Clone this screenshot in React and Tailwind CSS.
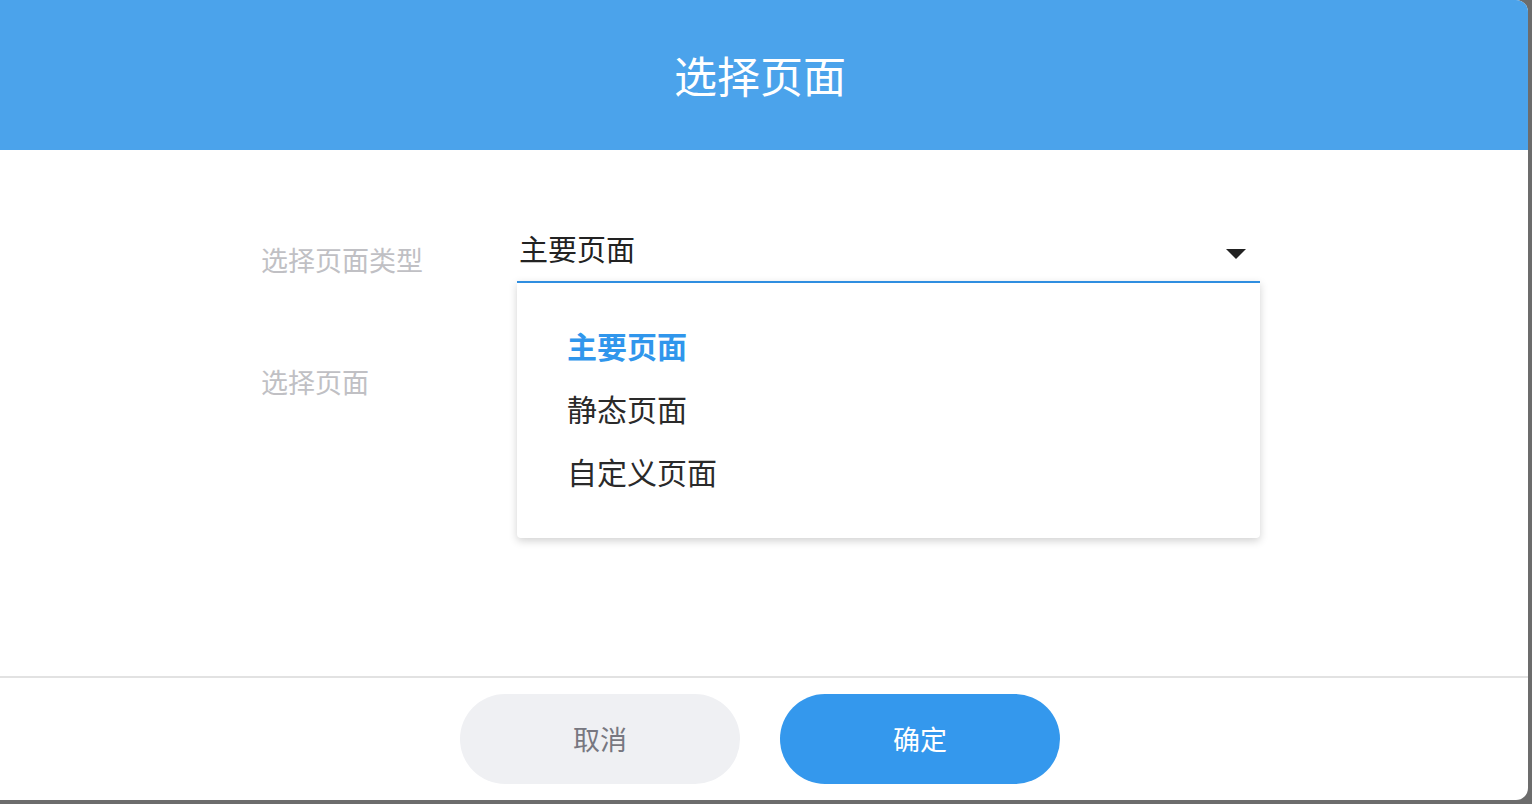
import React, { useState } from 'react';

const options = ['主要页面', '静态页面', '自定义页面'];

const SelectPageModal = () => {
    const [selected, setSelected] = useState('主要页面');

    return (
        <div
            className="w-[1532px] h-[804px] bg-[#6c6c6c] overflow-hidden"
            style={{ fontFamily: '"Noto Sans CJK SC", "Noto Sans", sans-serif' }}
        >
            <div className="w-[1528px] h-[800px] bg-white rounded-r-[12px] flex flex-col overflow-hidden">
                {/* Header */}
                <div className="h-[150px] shrink-0 bg-[#4ba3eb] flex items-center justify-center pb-[2px] pr-[8px]">
                    <h2 className="text-[43px] text-white">选择页面</h2>
                </div>

                {/* Body */}
                <div className="flex-1 pl-[261px] pt-[78px]">
                    <div className="flex">
                        <div className="w-[256px] flex flex-col">
                            <div className="h-[64px] flex items-center text-[27px] text-[#c0c0c4]">选择页面类型</div>
                            <div className="mt-[68px] h-[44px] flex items-center text-[27px] text-[#c0c0c4]">选择页面</div>
                        </div>

                        <div className="relative w-[743px]">
                            <div className="h-[53px] flex items-start justify-between pl-[2px] pr-[14px]">
                                <span className="text-[29px] text-[#222] leading-[40px]">{selected}</span>
                                <svg width="20" height="11" viewBox="0 0 20 11" className="mt-[21px]">
                                    <path d="M0 0 L20 0 L10 10 Z" fill="#222" />
                                </svg>
                            </div>

                            {/* Dropdown menu */}
                            <div className="absolute left-0 top-[53px] w-[743px] h-[257px] bg-white border-t-2 border-[#2f8ee0] rounded-b-[4px] shadow-[0_3px_8px_rgba(0,0,0,0.18)] pl-[50px] pt-[30px] flex flex-col">
                                {options.map((opt) => (
                                    <button
                                        key={opt}
                                        onClick={() => setSelected(opt)}
                                        className={`text-left h-[63px] leading-[40px] text-[30px] ${
                                            opt === selected ? 'text-[#3096ec] font-bold' : 'text-[#2a2a2a]'
                                        }`}
                                    >
                                        {opt}
                                    </button>
                                ))}
                            </div>
                        </div>
                    </div>
                </div>

                {/* Footer */}
                <div className="h-[124px] shrink-0 border-t-2 border-[#e2e2e2] flex items-start justify-center gap-[40px] pt-[16px] pr-[8px]">
                    <button className="w-[280px] h-[90px] rounded-full bg-[#eff0f3] text-[27px] text-[#777780]">取消</button>
                    <button className="w-[280px] h-[90px] rounded-full bg-[#3498ed] text-[27px] text-white">确定</button>
                </div>
            </div>
        </div>
    );
};

export default function App() {
    return <SelectPageModal />;
}
